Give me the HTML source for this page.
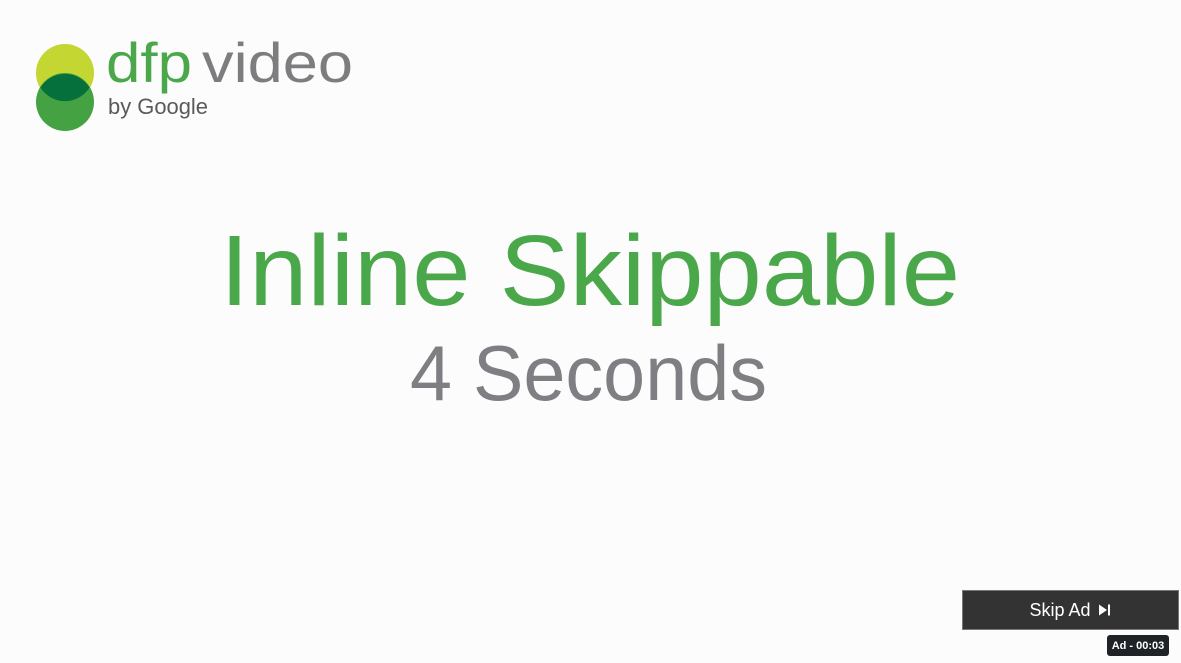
<!DOCTYPE html>
<html><head><meta charset="utf-8"><style>
html,body{margin:0;padding:0;width:1181px;height:663px;overflow:hidden;background:#fdfcfd;}
svg{position:absolute;left:0;top:0;}
.skip{position:absolute;left:962px;top:590px;width:215px;height:38px;background:#333;border:1px solid #777;color:#fff;font:18px "Liberation Sans",sans-serif;display:flex;align-items:center;justify-content:center;box-sizing:content-box;}
.badge{position:absolute;left:1107px;top:635px;width:62px;height:21px;background:#1f2226;border-radius:3px;color:#fff;font:bold 11px "Liberation Sans",sans-serif;display:flex;align-items:center;justify-content:center;}
</style></head><body>
<svg width="1181" height="663">
<circle cx="65" cy="73" r="29" fill="#c3d632"/>
<circle cx="65" cy="102" r="29" fill="#45a242"/>
<path d="M40.4 87.5 A29 29 0 0 1 89.6 87.5 A29 29 0 0 1 40.4 87.5Z" fill="#06703d"/>
<text x="106" y="82" font-family="Liberation Sans" font-size="56" fill="#4aa84a" textLength="86" lengthAdjust="spacingAndGlyphs">dfp</text>
<text x="202" y="82" font-family="Liberation Sans" font-size="56" fill="#7d7d80" textLength="151" lengthAdjust="spacingAndGlyphs">video</text>
<text x="108" y="114" font-family="Liberation Sans" font-size="22" fill="#5a5a5a" textLength="100" lengthAdjust="spacingAndGlyphs">by Google</text>
<text x="220" y="305" font-family="Liberation Sans" font-size="100" fill="#4aa84a" textLength="740" lengthAdjust="spacingAndGlyphs">Inline Skippable</text>
<text x="410" y="400" font-family="Liberation Sans" font-size="78" fill="#7f7e82" textLength="357" lengthAdjust="spacingAndGlyphs">4 Seconds</text>
</svg>
<div class="skip">Skip Ad&nbsp;<svg style="position:static" width="16" height="14" viewBox="0 0 16 14"><path d="M3 1.5 L11 7 L3 12.5Z" fill="#fff"/><rect x="12" y="1.5" width="2" height="11" fill="#fff"/></svg></div>
<div class="badge">Ad - 00:03</div>
</body></html>
